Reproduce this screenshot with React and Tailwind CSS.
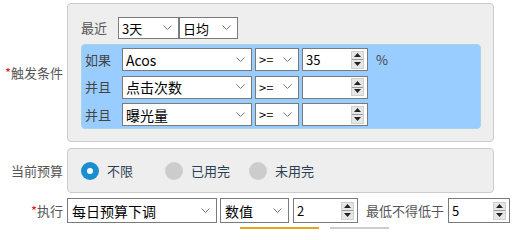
import React from "react";

const font = { fontFamily: '"Noto Sans CJK SC", "Noto Sans", sans-serif' };

const Chevron = () => (
  <svg width="9" height="6" viewBox="0 0 9 6" className="shrink-0">
    <path d="M0.5 0.5 L4.5 4.5 L8.5 0.5" fill="none" stroke="#777" strokeWidth="1" />
  </svg>
);

const Select = ({ value, className = "", textClass = "" }) => (
  <div className={`flex items-center justify-between bg-white border border-[#7a7a7a] pl-[3px] pr-[6px] ${className}`}>
    <span className={`text-[13px] text-black leading-none ${textClass}`}>{value}</span>
    <Chevron />
  </div>
);

const Spinner = () => (
  <div className="flex flex-col h-[18px] w-[13px] mr-[3px] bg-[#e6e6e6] border border-[#cfcfcf]">
    <div className="flex-1 flex items-center justify-center border-b border-[#9a9a9a]">
      <svg width="7" height="4" viewBox="0 0 7 4"><path d="M0 4 L3.5 0 L7 4 Z" fill="#222" /></svg>
    </div>
    <div className="flex-1 flex items-center justify-center">
      <svg width="7" height="4" viewBox="0 0 7 4"><path d="M0 0 L3.5 4 L7 0 Z" fill="#222" /></svg>
    </div>
  </div>
);

const NumInput = ({ value, className = "" }) => (
  <div className={`flex items-center justify-between bg-white border border-[#7a7a7a] pl-[3px] ${className}`}>
    <span className="text-[13px] text-black leading-none">{value}</span>
    <Spinner />
  </div>
);

const Radio = ({ checked, label }) => (
  <div className="flex items-center gap-[8px] w-[84px]">
    {checked ? (
      <div className="w-[18px] h-[18px] rounded-full bg-[#1a8fd0] flex items-center justify-center">
        <div className="w-[6px] h-[6px] rounded-full bg-white" />
      </div>
    ) : (
      <div className="w-[18px] h-[18px] rounded-full bg-[#cccccc]" />
    )}
    <span className="text-[13px] text-[#2b3f52]">{label}</span>
  </div>
);

const Label = ({ req, children }) => (
  <div className="w-[67px] shrink-0 pr-[4px] text-right text-[13px] text-[#555]">
    {req && <span className="text-[#e02020]">*</span>}
    {children}
  </div>
);

const CondRow = ({ label, field, value }) => (
  <div className="flex items-center h-[23px]">
    <span className="w-[37px] text-[13px] text-[#444]">{label}</span>
    <Select value={field} className="w-[130px] h-[23px]" textClass="text-[14px]" />
    <Select value=">=" className="w-[44px] h-[23px] ml-[3px]" textClass="text-[12px]" />
    <NumInput value={value} className="w-[66px] h-[23px] ml-[3px]" />
    {value && <span className="ml-[8px] text-[13px] text-[#444]">%</span>}
  </div>
);

export default function App() {
  return (
    <div className="w-[513px] h-[229px] overflow-hidden bg-white pt-[3px]" style={font}>
      <div className="flex items-center">
        <Label req>触发条件</Label>
        <div className="w-[427px] h-[139px] bg-[#eeeeee] border border-[#cccccc] rounded-[4px] pt-[13px] pl-[13px]">
          <div className="flex items-center h-[22px]">
            <span className="w-[37px] text-[13px] text-[#555]">最近</span>
            <Select value="3天" className="w-[61px] h-[22px]" />
            <Select value="日均" className="w-[59px] h-[22px]" />
          </div>
          <div className="mt-[5px] w-[400px] h-[85px] bg-[#99ccff] border border-[#a8d4e8] rounded-[4px] pl-[3px] pt-[3px] flex flex-col gap-[4.5px]">
            <CondRow label="如果" field="Acos" value="35" />
            <CondRow label="并且" field="点击次数" value="" />
            <CondRow label="并且" field="曝光量" value="" />
          </div>
        </div>
      </div>
      <div className="flex items-center mt-[6px]">
        <Label>当前预算</Label>
        <div className="w-[427px] h-[45px] bg-[#eeeeee] border border-[#cccccc] rounded-[4px] pl-[13px] flex items-center">
          <Radio checked label="不限" />
          <Radio label="已用完" />
          <Radio label="未用完" />
        </div>
      </div>
      <div className="flex items-center mt-[5px] h-[25px]">
        <Label req>执行</Label>
        <Select value="每日预算下调" className="w-[150px] h-[25px]" textClass="text-[14px] pl-[1px]" />
        <Select value="数值" className="w-[69px] h-[25px] ml-[3px]" textClass="text-[14px] pl-[1px]" />
        <NumInput value="2" className="w-[65px] h-[25px] ml-[4px]" />
        <span className="ml-[8px] text-[13px] text-[#555]">最低不得低于</span>
        <NumInput value="5" className="w-[62px] h-[25px] ml-[4px]" />
      </div>
      <div className="flex mt-[4px] h-[10px]">
        <div className="ml-[240px] w-[79px] h-[10px] border-t-2 border-[#e0a428] bg-[#f5b82e]" />
        <div className="ml-[11px] w-[59px] h-[10px] border-t-2 border-[#cccccc] bg-[#f2f2f2]" />
      </div>
    </div>
  );
}
